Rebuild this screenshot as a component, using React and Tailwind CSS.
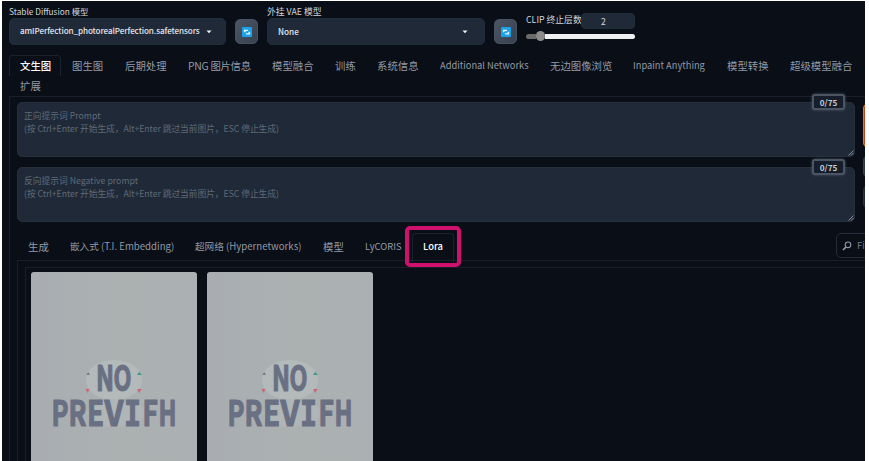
import React from "react";

const MAIN_TABS = [
  ["文生图", "w-[52px]", ""],
  ["图生图", "w-[53px]", ""],
  ["后期处理", "w-[63px]", ""],
  ["PNG 图片信息", "w-[84px]", "tracking-[-0.3px]"],
  ["模型融合", "w-[63px]", ""],
  ["训练", "w-[42px]", ""],
  ["系统信息", "w-[63px]", ""],
  ["Additional Networks", "w-[110px]", "text-[9.3px]"],
  ["无边图像浏览", "w-[83px]", ""],
  ["Inpaint Anything", "w-[94px]", "text-[9.3px]"],
  ["模型转换", "w-[63px]", ""],
  ["超级模型融合", "w-[72px]", ""],
];

const SUB_TABS = [
  ["生成", "w-[42px]", ""],
  ["嵌入式 (T.I. Embedding)", "w-[125px]", "text-[9.65px]"],
  ["超网络 (Hypernetworks)", "w-[128px]", "text-[9.65px]"],
  ["模型", "w-[42px]", ""],
  ["LyCORIS", "w-[47px]", "text-[9.4px]"],
];

function RefreshButton() {
  return (
    <button className="flex h-[25px] w-[23px] shrink-0 items-center justify-center rounded-[5px] border border-[#475160] bg-gradient-to-br from-[#4b5563] to-[#374151]">
      <svg width="10" height="10" viewBox="0 0 10 10">
        <rect width="10" height="10" rx="1" fill="#1da1e8" />
        <path d="M2.7 5.2V3.3H6M7.3 4.8v2H4" fill="none" stroke="#e8f6ff" strokeWidth="1.2" />
        <path d="M1.4 4.4h2.6L2.7 2.6zM6 5.7h2.6L7.3 7.4z" fill="#e8f6ff" />
      </svg>
    </button>
  );
}

function Caret() {
  return (
    <svg width="6" height="4" viewBox="0 0 6 4" className="shrink-0">
      <path d="M0.5 0.5h5L3 3.3z" fill="#f3f4f6" />
    </svg>
  );
}

function Prompt({ label }) {
  return (
    <div className="relative h-[55px] w-[838px] rounded-[5px] border border-[#25303c] bg-[#1f2937] px-[6px] pt-[7px] text-[8.75px] leading-[12.7px] text-[#5f6977]">
      <div>{label}</div>
      <div className="whitespace-nowrap tracking-[-0.06px]">(按 Ctrl+Enter 开始生成，Alt+Enter 跳过当前图片，ESC 停止生成)</div>
      <div className="absolute -top-[9px] right-[9px] flex h-[16px] w-[33px] items-center justify-center rounded-[3px] border-2 border-[#4b5563] bg-[#151e2a] text-[8.2px] font-bold text-[#c6cad1] shadow-[0_0_3px_#4b5563]">
        0/75
      </div>
      <svg className="absolute bottom-0 right-0" width="6" height="6" viewBox="0 0 6 6">
        <path d="M0.5 5.5l5-5M3 5.5L5.5 3" stroke="#9298a1" strokeWidth="0.9" />
      </svg>
    </div>
  );
}

const LETTERS = [
  ["N", 65, 118.5, 18],
  ["O", 82.5, 118.5, 18],
  ["P", 20.5, 154, 17],
  ["R", 37.5, 154, 18],
  ["E", 56, 154, 17],
  ["V", 73.5, 154, 19],
  ["I", 93, 154, 17],
  ["F", 111.5, 154, 15.5],
  ["H", 127.5, 154, 18],
];

function PreviewCard() {
  return (
    <div className="h-[200px] w-[166px] shrink-0 overflow-hidden rounded-t-[3px] bg-gradient-to-r from-[#a9adb2] via-[#abb0b1] to-[#abb0b2]">
      <svg width="166" height="200" viewBox="0 0 166 200">
        <ellipse cx="83" cy="108" rx="28" ry="20" fill="#b4b9ba" />
        <ellipse cx="85" cy="141" rx="29" ry="14" fill="#b0b5b7" />
        <path d="M55.5 103l1.7-3 1.7 3z" fill="#70777e" />
        <path d="M106 103l2.4-3.2 2.4 3.2z" fill="#3d9c83" />
        <path d="M54.5 117l2 4 2-4zM106 117l2.2 4 2.2-4z" fill="#ca6476" />
        {LETTERS.map(([ch, x, y, w]) => (
          <text
            key={ch}
            x={x}
            y={y}
            textLength={w}
            lengthAdjust="spacingAndGlyphs"
            fill="#6a7083"
            stroke="#6a7083"
            strokeWidth="1.2"
            strokeLinejoin="round"
            fontSize="35.5"
            fontWeight="700"
            fontFamily={ch === "I" ? "DejaVu Sans Mono, monospace" : "Noto Sans CJK SC, sans-serif"}
          >
            {ch}
          </text>
        ))}
      </svg>
    </div>
  );
}

export default function App() {
  return (
    <div className="h-[461px] w-[869px] overflow-hidden bg-white pl-[2px] pt-px font-['Noto_Sans_CJK_SC',sans-serif]">
      <div className="h-[460px] w-[863px] overflow-hidden bg-[#090e17]">
        <div className="flex h-[54px] pl-[7px] text-[9px] text-[#d1d5db]">
          <div className="w-[226px] pt-[4px]">
            <div className="h-[13px] whitespace-nowrap text-[8.3px] leading-[13px]">Stable Diffusion 模型</div>
            <div className="flex h-[27px] w-[217px] items-center gap-[6px] rounded-[5px] border border-[#222d3a] bg-[#1f2937] pl-[10px] text-[8.1px] font-medium text-[#e5e7eb]">
              <span className="whitespace-nowrap tracking-[-0.09px]">amIPerfection_photorealPerfection.safetensors</span>
              <Caret />
            </div>
          </div>
          <div className="w-[32px] pt-[18px]"><RefreshButton /></div>
          <div className="w-[227px] pt-[4px]">
            <div className="h-[13px] whitespace-nowrap text-[8.8px] leading-[13px]">外挂 VAE 模型</div>
            <div className="flex h-[27px] w-[218px] items-center justify-between rounded-[5px] border border-[#222d3a] bg-[#1f2937] pl-[10px] pr-[16px] text-[8.2px] font-medium text-[#e5e7eb]">
              <span>None</span>
              <Caret />
            </div>
          </div>
          <div className="w-[32px] pt-[18px]"><RefreshButton /></div>
          <div className="w-[110px] pt-[12px]">
            <div className="flex h-[16px] items-center">
              <span className="w-[55px] whitespace-nowrap pb-[2px] text-[8.8px]">CLIP 终止层数</span>
              <span className="flex h-[16px] w-[54px] items-center rounded-[4px] border border-[#222d3a] bg-[#1f2937] pl-[19px] text-[8.6px]">2</span>
            </div>
            <div className="mt-[2px] flex h-[10px] items-center">
              <div className="h-[5px] w-[10px] rounded-l-full bg-[#6b6b6b]" />
              <div className="h-[10px] w-[9px] rounded-full bg-[#8b8b8b]" />
              <div className="h-[5px] w-[90px] rounded-r-full bg-[#eff0f2]" />
            </div>
          </div>
        </div>

        <div className="flex h-[41px] flex-wrap content-start pl-[7px] text-[10.4px] text-[#939aa6]">
          {MAIN_TABS.map(([name, width, font], i) => (
            <div
              key={name}
              className={`flex h-[21px] items-center whitespace-nowrap rounded-t-[4px] border border-b-0 pl-[10px] ${width} ${i === 0 ? "border-[#1b222e] font-medium text-white" : "border-transparent"}`}
            >
              <span className={font}>{name}</span>
            </div>
          ))}
          <div className="flex h-[20px] w-full items-center pl-[11px]">扩展</div>
        </div>

        <div className="ml-[7px] h-[380px] border-l border-t border-[#191e29] pl-[7px] pt-[5px]">
          <div className="flex gap-[9px]">
            <div className="flex shrink-0 flex-col gap-[10px]">
              <Prompt label="正向提示词 Prompt" />
              <Prompt label="反向提示词 Negative prompt" />
            </div>
            <div className="-ml-px flex flex-col">
              <div className="mt-[2px] h-[43px] w-[40px] rounded-[4px] border border-[#f97316] bg-[#b8430c]" />
              <div className="mt-[9px] h-[21px] w-[40px] rounded-[4px] border border-[#374151] bg-[#2b3543]" />
              <div className="mt-[9px] h-[22px] w-[40px] rounded-[4px] border border-[#283241] bg-[#1f2937]" />
            </div>
          </div>

          <div className="flex h-[39px] text-[10.4px] text-[#939aa6]">
            <div className="flex w-[819px] shrink-0 pt-[13px]">
              {SUB_TABS.map(([name, width, font]) => (
                <div key={name} className={`flex h-[23px] shrink-0 items-center whitespace-nowrap pl-[11px] ${width}`}>
                  <span className={font}>{name}</span>
                </div>
              ))}
              <div className="-mt-[9px] ml-[4px] h-[41px] w-[56px] rounded-[5px] border-4 border-[#cf116d] px-[3px] pt-[3px]">
                <div className="flex h-[29px] items-center justify-center rounded-t-[4px] border border-b-0 border-[#1b222e] pb-[4px] text-[9.4px] font-medium text-white">
                  Lora
                </div>
              </div>
            </div>
            <div className="mt-[11px] flex h-[25px] w-[60px] shrink-0 items-center gap-[5px] rounded-[5px] border border-[#242c39] pl-[5px] text-[9.4px] text-[#717987]">
              <svg width="10" height="10" viewBox="0 0 10 10" fill="none" stroke="#929aa6" className="shrink-0">
                <circle cx="6" cy="3.8" r="2.8" strokeWidth="1.1" />
                <path d="M4 6L1 9" strokeWidth="1.7" />
              </svg>
              Filter
            </div>
          </div>

          <div className="-mt-px h-[205px] border-l border-t border-[#191e29] pl-[7px] pt-[6px]">
            <div className="flex h-[205px] gap-[10px] border-l border-t border-[#191e29] pl-[5px] pt-[4px]">
              <PreviewCard />
              <PreviewCard />
            </div>
          </div>
        </div>
      </div>
    </div>
  );
}
